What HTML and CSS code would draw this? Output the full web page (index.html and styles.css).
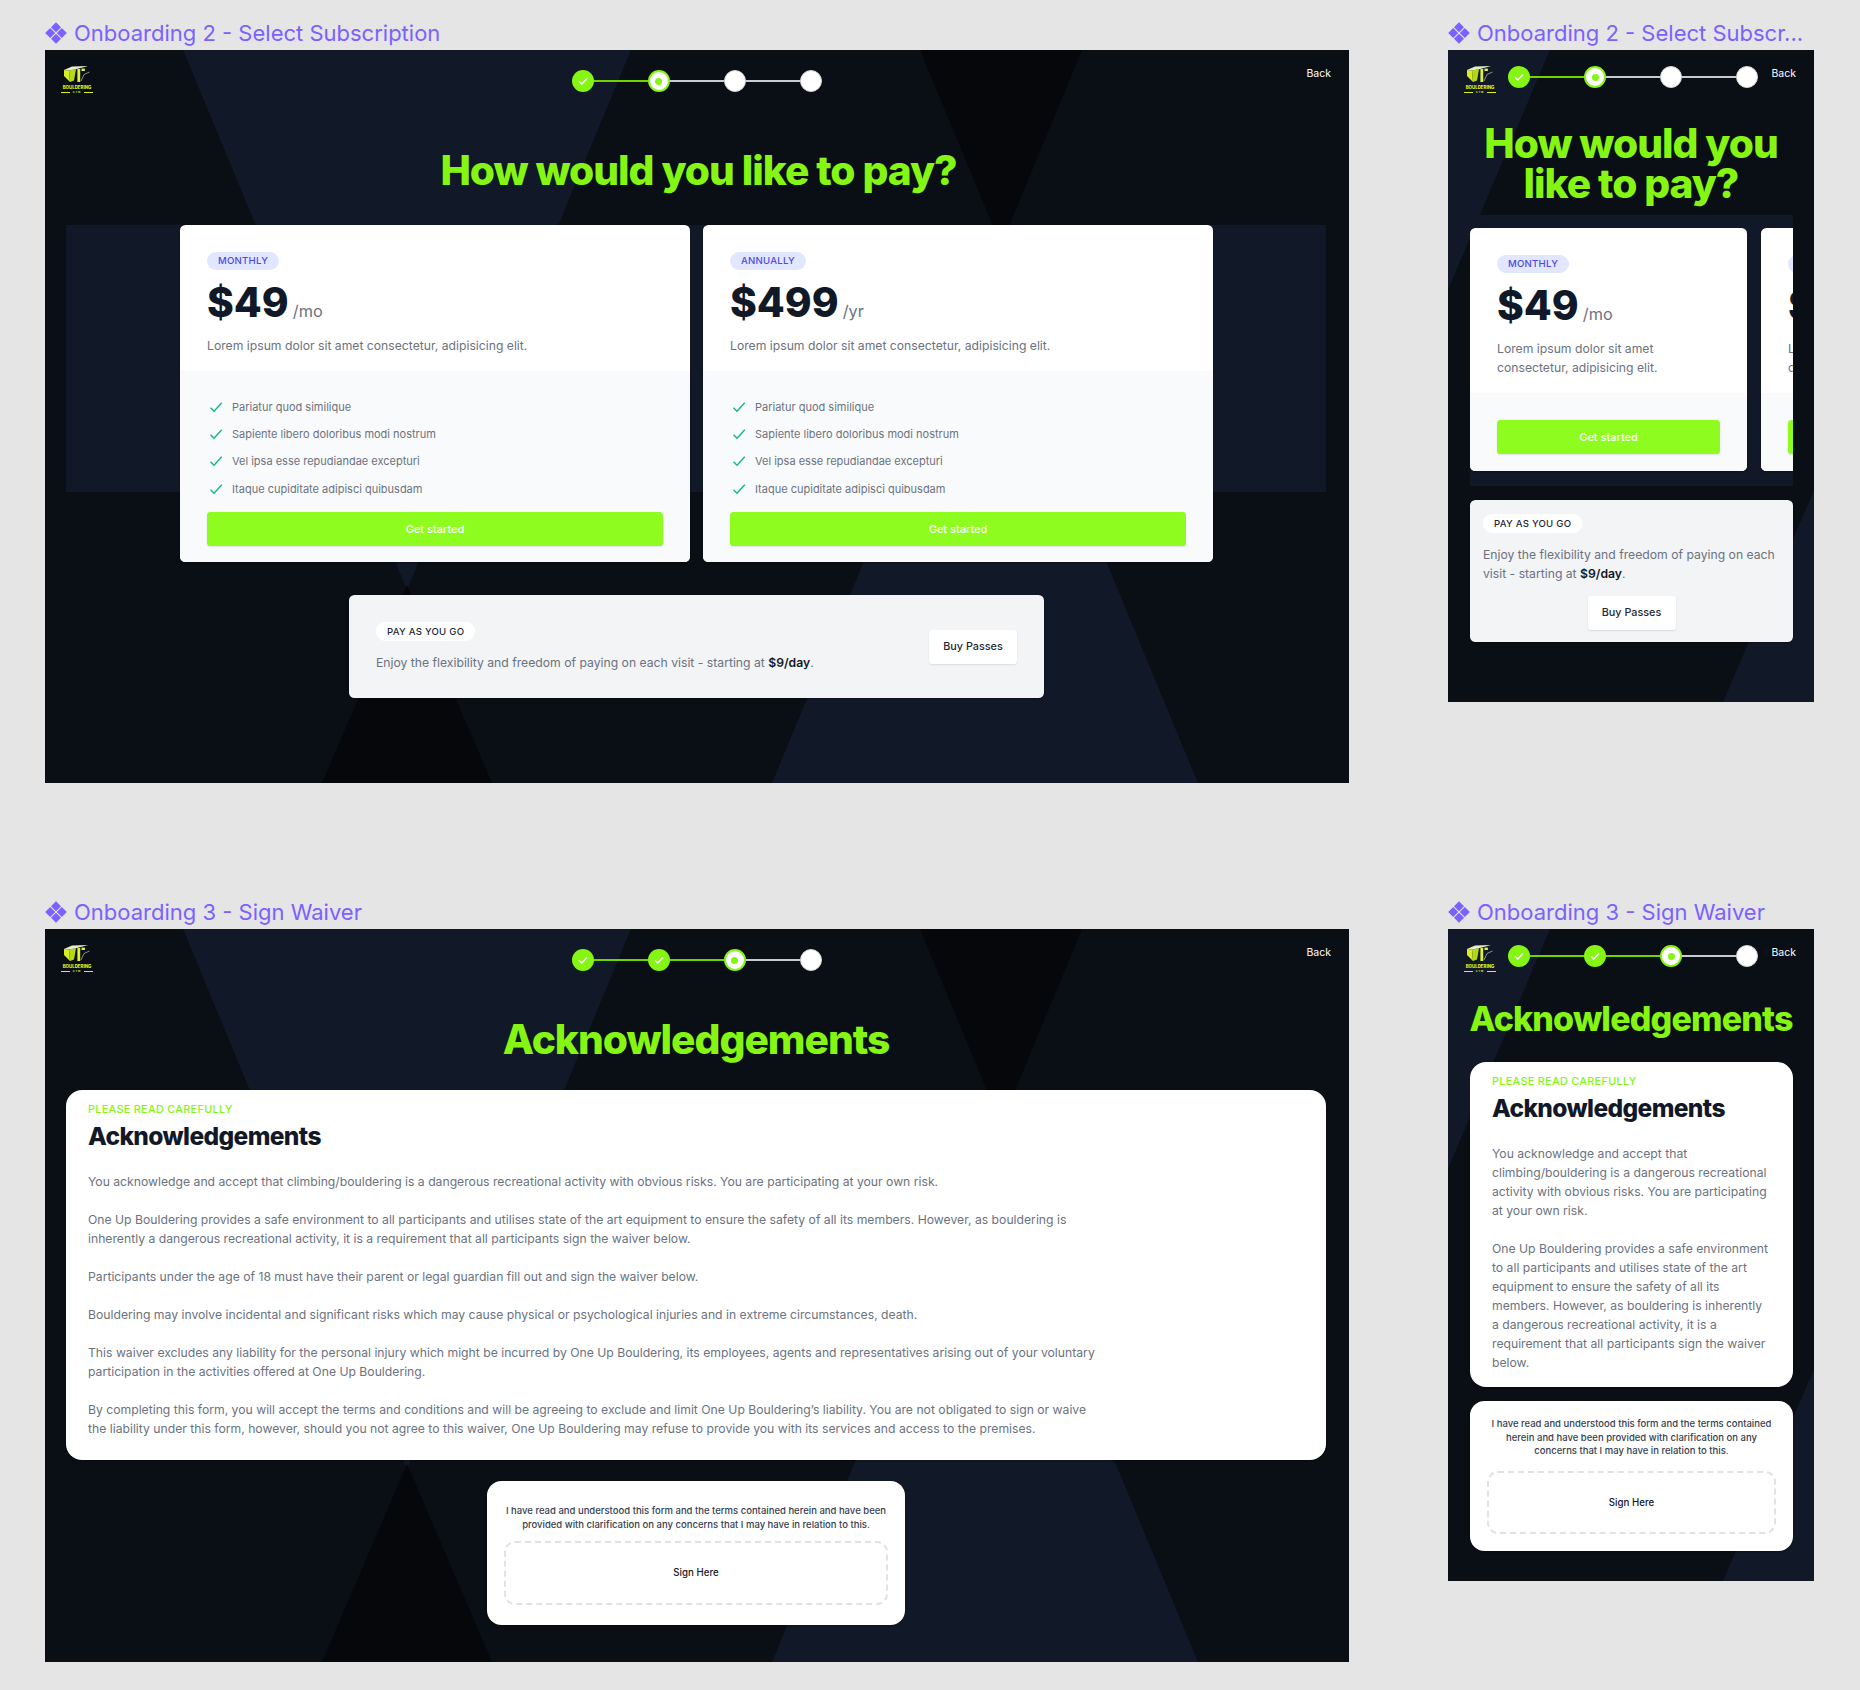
FILE: index.html
```html
<!DOCTYPE html>
<html lang="en">
<head>
  <meta charset="UTF-8">
  <meta name="viewport" content="width=device-width, initial-scale=1.0">
  <title>Onboarding screens</title>
  <link rel="stylesheet" href="styles.css">
</head>
<body>
  <svg class="defs" width="0" height="0" aria-hidden="true">
    <symbol id="logo-mark" viewBox="0 0 32 22">
      <polygon points="3,6 8,6.5 9,18 3,12" fill="#d6ee2a"/>
      <polygon points="8,6.5 15,5.3 13,16.5 9,18" fill="#b4d814"/>
      <polygon points="3,6 11,2.5 27,2 15,5.3 8,6.5" fill="#e6ecc8"/>
      <rect x="16.4" y="5" width="2.8" height="13" fill="#dff23a"/>
      <rect x="20.5" y="4.6" width="3.4" height="2.4" fill="#dff23a"/>
      <path d="M20 17 L23 10.5 L28.5 8" stroke="#dfe6d0" stroke-width=".6" fill="none"/>
    </symbol>
    <symbol id="shapes-wide" viewBox="0 0 1304 733" preserveAspectRatio="none">
      <polygon points="138,0 586,0 362,540" fill="#111827"/>
      <polygon points="362,535 277,733 447,733" fill="#05070b"/>
      <polygon points="875,0 1037,0 956,195" fill="#05070b"/>
      <polygon points="940,219 727,733 1153,733" fill="#111827"/>
    </symbol>
    <symbol id="shapes-narrow" viewBox="0 0 366 652" preserveAspectRatio="none">
      <polygon points="0,0 102,0 0,240" fill="#111827"/>
      <polygon points="366,440 275,652 366,652" fill="#111827"/>
    </symbol>
    <symbol id="tick" viewBox="0 0 14 14">
      <path d="M1.5 7.8 L5 11.2 L12.8 2.8" fill="none" stroke="#10b981" stroke-width="1.4"/>
    </symbol>
    <symbol id="tick-white" viewBox="0 0 12 12">
      <path d="M2 6.4 L4.8 9 L10 3.4" fill="none" stroke="#fff" stroke-width="1.5"/>
    </symbol>
    <symbol id="component" viewBox="0 0 22 22">
      <polygon points="11,0.2 16,5.2 11,10.2 6,5.2" fill="#7b61ff"/>
      <polygon points="5.2,6 10.2,11 5.2,16 0.2,11" fill="#7b61ff"/>
      <polygon points="16.8,6 21.8,11 16.8,16 11.8,11" fill="#7b61ff"/>
      <polygon points="11,11.8 16,16.8 11,21.8 6,16.8" fill="#7b61ff"/>
    </symbol>
  </svg>

  <main class="board">

    <!-- subscription, desktop -->
    <section class="artboard">
      <h3 class="frame-label"><svg class="frame-icon"><use href="#component"/></svg>Onboarding 2 - Select Subscription</h3>
      <div class="frame frame-wide">
        <svg class="frame-bg"><use href="#shapes-wide"/></svg>
        <div class="band-wide"></div>
        <div class="topbar topbar-wide">
          <div class="logo"><svg><use href="#logo-mark"/></svg><span class="logo-name">BOULDERING</span><span class="logo-gym">GYM</span></div>
          <div class="stepper">
            <span class="step done"><svg><use href="#tick-white"/></svg></span><span class="step-line on"></span>
            <span class="step current"></span><span class="step-line"></span>
            <span class="step"></span><span class="step-line"></span>
            <span class="step"></span>
          </div>
          <a class="back">Back</a>
        </div>
        <h1 class="headline pay-headline">How would you like to pay?</h1>
        <div class="plans">
          <article class="plan">
            <div class="plan-top">
              <span class="pill">Monthly</span>
              <p class="price"><b>$49</b> <span>/mo</span></p>
              <p class="plan-desc">Lorem ipsum dolor sit amet consectetur, adipisicing elit.</p>
            </div>
            <div class="plan-bottom">
              <ul class="features">
                <li><svg><use href="#tick"/></svg>Pariatur quod similique</li>
                <li><svg><use href="#tick"/></svg>Sapiente libero doloribus modi nostrum</li>
                <li><svg><use href="#tick"/></svg>Vel ipsa esse repudiandae excepturi</li>
                <li><svg><use href="#tick"/></svg>Itaque cupiditate adipisci quibusdam</li>
              </ul>
              <a class="btn-green">Get started</a>
            </div>
          </article>
          <article class="plan">
            <div class="plan-top">
              <span class="pill">Annually</span>
              <p class="price"><b>$499</b> <span>/yr</span></p>
              <p class="plan-desc">Lorem ipsum dolor sit amet consectetur, adipisicing elit.</p>
            </div>
            <div class="plan-bottom">
              <ul class="features">
                <li><svg><use href="#tick"/></svg>Pariatur quod similique</li>
                <li><svg><use href="#tick"/></svg>Sapiente libero doloribus modi nostrum</li>
                <li><svg><use href="#tick"/></svg>Vel ipsa esse repudiandae excepturi</li>
                <li><svg><use href="#tick"/></svg>Itaque cupiditate adipisci quibusdam</li>
              </ul>
              <a class="btn-green">Get started</a>
            </div>
          </article>
        </div>
        <div class="payg payg-wide">
          <div>
            <span class="pill pill-white">Pay as you go</span>
            <p class="payg-text">Enjoy the flexibility and freedom of paying on each visit - starting at <b>$9/day</b>.</p>
          </div>
          <a class="btn-white">Buy Passes</a>
        </div>
      </div>
    </section>

    <!-- subscription, mobile -->
    <section class="artboard">
      <h3 class="frame-label"><svg class="frame-icon"><use href="#component"/></svg>Onboarding 2 - Select Subscr...</h3>
      <div class="frame frame-narrow">
        <svg class="frame-bg"><use href="#shapes-narrow"/></svg>
        <div class="topbar topbar-narrow">
          <div class="logo"><svg><use href="#logo-mark"/></svg><span class="logo-name">BOULDERING</span><span class="logo-gym">GYM</span></div>
          <div class="stepper">
            <span class="step done"><svg><use href="#tick-white"/></svg></span><span class="step-line on"></span>
            <span class="step current"></span><span class="step-line"></span>
            <span class="step"></span><span class="step-line"></span>
            <span class="step"></span>
          </div>
          <a class="back">Back</a>
        </div>
        <h1 class="headline pay-headline-m">How would you like to pay?</h1>
        <div class="plans-m">
          <article class="plan">
            <div class="plan-top">
              <span class="pill">Monthly</span>
              <p class="price"><b>$49</b> <span>/mo</span></p>
              <p class="plan-desc">Lorem ipsum dolor sit amet consectetur, adipisicing elit.</p>
            </div>
            <div class="plan-bottom plan-bottom-m">
              <a class="btn-green">Get started</a>
            </div>
          </article>
          <article class="plan">
            <div class="plan-top">
              <span class="pill">Annually</span>
              <p class="price"><b>$499</b> <span>/yr</span></p>
              <p class="plan-desc">Lorem ipsum dolor sit amet consectetur, adipisicing elit.</p>
            </div>
            <div class="plan-bottom plan-bottom-m">
              <a class="btn-green">Get started</a>
            </div>
          </article>
        </div>
        <div class="payg payg-narrow">
          <span class="pill pill-white">Pay as you go</span>
          <p class="payg-text">Enjoy the flexibility and freedom of paying on each visit - starting at <b>$9/day</b>.</p>
          <a class="btn-white">Buy Passes</a>
        </div>
      </div>
    </section>

    <!-- waiver, desktop -->
    <section class="artboard">
      <h3 class="frame-label"><svg class="frame-icon"><use href="#component"/></svg>Onboarding 3 - Sign Waiver</h3>
      <div class="frame frame-wide">
        <svg class="frame-bg"><use href="#shapes-wide"/></svg>
        <div class="topbar topbar-wide">
          <div class="logo"><svg><use href="#logo-mark"/></svg><span class="logo-name">BOULDERING</span><span class="logo-gym">GYM</span></div>
          <div class="stepper">
            <span class="step done"><svg><use href="#tick-white"/></svg></span><span class="step-line on"></span>
            <span class="step done"><svg><use href="#tick-white"/></svg></span><span class="step-line on"></span>
            <span class="step current"></span><span class="step-line"></span>
            <span class="step"></span>
          </div>
          <a class="back">Back</a>
        </div>
        <h1 class="headline waiver-headline">Acknowledgements</h1>
        <div class="waiver waiver-wide">
          <p class="eyebrow">Please read carefully</p>
          <h2 class="waiver-title">Acknowledgements</h2>
          <div class="waiver-body">
            <p>You acknowledge and accept that climbing/bouldering is a dangerous recreational activity with obvious risks. You are participating at your own risk.</p>
            <p>One Up Bouldering provides a safe environment to all participants and utilises state of the art equipment to ensure the safety of all its members. However, as bouldering is inherently a dangerous recreational activity, it is a requirement that all participants sign the waiver below.</p>
            <p>Participants under the age of 18 must have their parent or legal guardian fill out and sign the waiver below.</p>
            <p>Bouldering may involve incidental and significant risks which may cause physical or psychological injuries and in extreme circumstances, death.</p>
            <p>This waiver excludes any liability for the personal injury which might be incurred by One Up Bouldering, its employees, agents and representatives arising out of your voluntary participation in the activities offered at One Up Bouldering.</p>
            <p>By completing this form, you will accept the terms and conditions and will be agreeing to exclude and limit One Up Bouldering’s liability. You are not obligated to sign or waive the liability under this form, however, should you not agree to this waiver, One Up Bouldering may refuse to provide you with its services and access to the premises.</p>
          </div>
        </div>
        <div class="sign sign-wide">
          <p class="sign-text">I have read and understood this form and the terms contained herein and have been provided with clarification on any concerns that I may have in relation to this.</p>
          <div class="sign-box">Sign Here</div>
        </div>
      </div>
    </section>

    <!-- waiver, mobile -->
    <section class="artboard">
      <h3 class="frame-label"><svg class="frame-icon"><use href="#component"/></svg>Onboarding 3 - Sign Waiver</h3>
      <div class="frame frame-narrow">
        <svg class="frame-bg"><use href="#shapes-narrow"/></svg>
        <div class="topbar topbar-narrow">
          <div class="logo"><svg><use href="#logo-mark"/></svg><span class="logo-name">BOULDERING</span><span class="logo-gym">GYM</span></div>
          <div class="stepper">
            <span class="step done"><svg><use href="#tick-white"/></svg></span><span class="step-line on"></span>
            <span class="step done"><svg><use href="#tick-white"/></svg></span><span class="step-line on"></span>
            <span class="step current"></span><span class="step-line"></span>
            <span class="step"></span>
          </div>
          <a class="back">Back</a>
        </div>
        <h1 class="headline waiver-headline-m">Acknowledgements</h1>
        <div class="waiver waiver-narrow">
          <p class="eyebrow">Please read carefully</p>
          <h2 class="waiver-title">Acknowledgements</h2>
          <div class="waiver-body">
            <p>You acknowledge and accept that climbing/bouldering is a dangerous recreational activity with obvious risks. You are participating at your own risk.</p>
            <p>One Up Bouldering provides a safe environment to all participants and utilises state of the art equipment to ensure the safety of all its members. However, as bouldering is inherently a dangerous recreational activity, it is a requirement that all participants sign the waiver below.</p>
          </div>
        </div>
        <div class="sign sign-narrow">
          <p class="sign-text">I have read and understood this form and the terms contained herein and have been provided with clarification on any concerns that I may have in relation to this.</p>
          <div class="sign-box">Sign Here</div>
        </div>
      </div>
    </section>

  </main>
</body>
</html>
```

FILE: styles.css
```css
* {
  box-sizing: border-box;
}

body {
  margin: 0;
  background-color: #e5e5e5;
  font-family: 'Inter', 'Noto Sans', sans-serif;
  color: #111827;
}

p, h1, h2, h3, ul {
  margin: 0;
  padding: 0;
}

.defs {
  position: absolute;
}

/* canvas */
.board {
  display: grid;
  grid-template-columns: 1304px 366px;
  column-gap: 99px;
  row-gap: 116px;
  align-items: start;
  padding: 20px 0 0 45px;
}

.frame-label {
  display: flex;
  align-items: center;
  gap: 7px;
  height: 30px;
  font-size: 22px;
  font-weight: 400;
  line-height: 26px;
  color: #7b61ff;
  white-space: nowrap;
  padding-bottom: 4px;
}

.frame-icon {
  width: 22px;
  height: 22px;
  flex: none;
}

.frame {
  position: relative;
  overflow: hidden;
  background-color: #0a0e15;
}

.frame > * {
  position: relative;
}

.frame-wide {
  width: 1304px;
  height: 733px;
}

.frame-narrow {
  width: 366px;
  height: 652px;
}

.frame > .frame-bg,
.frame > .band-wide {
  position: absolute;
}

.frame-bg {
  top: 0;
  left: 0;
  width: 100%;
  height: 100%;
}

.band-wide {
  top: 175px;
  left: 21px;
  width: 1260px;
  height: 267px;
  background-color: #111827;
}

/* top bar */
.topbar {
  height: 46px;
  padding: 14px 17px 0 16px;
  align-items: start;
}

.topbar-wide {
  display: grid;
  grid-template-columns: 1fr auto 1fr;
}

.topbar-narrow {
  display: flex;
  gap: 12px;
}

.logo {
  display: flex;
  flex-direction: column;
  align-items: center;
  width: 32px;
  height: 32px;
  flex: none;
}

.logo svg {
  width: 32px;
  height: 22px;
  flex: none;
}

.logo-name {
  font-size: 4.4px;
  font-weight: 800;
  line-height: 4.5px;
  white-space: nowrap;
  color: #dcf01e;
}

.logo-gym {
  display: flex;
  align-items: center;
  gap: 3px;
  width: 100%;
  font-size: 2.4px;
  font-weight: 700;
  line-height: 3px;
  letter-spacing: 0.4em;
  color: #dcf01e;
}

.logo-gym::before,
.logo-gym::after {
  content: "";
  flex: 1;
  height: 0.4px;
  background-color: #dcf01e;
}

.stepper {
  display: flex;
  align-items: center;
  margin-top: 6px;
}

.topbar-narrow .stepper {
  margin-top: 2px;
}

.step {
  display: flex;
  align-items: center;
  justify-content: center;
  width: 22px;
  height: 22px;
  flex: none;
  border-radius: 50%;
  background-color: #fff;
  border: 1.5px solid #d1d5db;
}

.step svg {
  width: 12px;
  height: 12px;
}

.step.done {
  background-color: #85f514;
  border: none;
}

.step.current {
  border: 2px solid #85f514;
}

.step.current::after {
  content: "";
  width: 7px;
  height: 7px;
  border-radius: 50%;
  background-color: #85f514;
}

.step-line {
  width: 54px;
  height: 2px;
  background-color: #c9cbd1;
}

.step-line.on {
  background-color: #6fd400;
}

.back {
  justify-self: end;
  margin: 3px 1px 0 auto;
  font-size: 10.5px;
  line-height: 14px;
  font-weight: 400;
  color: #fff;
}

/* headings */
.headline {
  text-align: center;
  font-weight: 800;
  letter-spacing: -0.025em;
  color: #85f514;
}

.pay-headline {
  margin: 53px 0 32px;
  padding-left: 3px;
  font-size: 40.7px;
  line-height: 44px;
}

.pay-headline-m {
  margin: 28px 22px 11px;
  font-size: 40.7px;
  line-height: 40px;
}

.waiver-headline {
  margin: 43px 0 28px;
  padding-right: 2px;
  font-size: 40.7px;
  line-height: 44px;
}

.waiver-headline-m {
  margin: 24px 0 23px;
  font-size: 34px;
  line-height: 40px;
}

/* plan cards */
.plans {
  display: flex;
  gap: 13px;
  padding-left: 135px;
}

.plans-m {
  display: flex;
  gap: 14px;
  width: 323px;
  height: 271px;
  margin-left: 22px;
  padding-top: 13px;
  overflow: hidden;
  background-color: #111827;
}

.plan {
  display: flex;
  flex-direction: column;
  width: 510px;
  flex: none;
  border-radius: 5.5px;
  overflow: hidden;
  background-color: #fff;
  box-shadow: 0 1px 2px rgba(0, 0, 0, 0.3);
}

.plans-m .plan {
  width: 277px;
  height: 243px;
}

.plan-top {
  padding: 27px 27px 16px;
}

.pill {
  display: block;
  width: fit-content;
  height: 18px;
  padding: 0 11px;
  border-radius: 9px;
  font-size: 9.6px;
  font-weight: 500;
  line-height: 18px;
  letter-spacing: 0.025em;
  text-transform: uppercase;
  color: #4f46e5;
  background-color: #e0e7ff;
}

.pill-white {
  height: 19px;
  line-height: 19px;
  color: #1f2937;
  background-color: #fff;
}

.price {
  display: flex;
  align-items: baseline;
  gap: 4px;
  height: 44px;
  margin-top: 11px;
  line-height: 44px;
}

.price b {
  font-size: 40.7px;
  font-weight: 800;
  color: #111827;
}

.price span {
  font-size: 16.3px;
  color: #6b7280;
}

.plan-desc {
  margin-top: 11px;
  font-size: 12.2px;
  line-height: 19px;
  color: #6b7280;
}

.plan-bottom {
  flex: 1;
  padding: 27px 27px 16px;
  background-color: #f9fafb;
}

.plan-bottom-m {
  padding-top: 27px;
}

.features {
  display: flex;
  flex-direction: column;
  gap: 9.2px;
  list-style: none;
  margin-bottom: 14.7px;
}

.features li {
  display: flex;
  align-items: center;
  gap: 9px;
  height: 18px;
  font-size: 11px;
  color: #6b7280;
}

.features svg {
  width: 14px;
  height: 14px;
  margin-left: 2px;
  flex: none;
}

.btn-green {
  display: block;
  height: 34px;
  border-radius: 3.6px;
  font-size: 11px;
  font-weight: 500;
  line-height: 34px;
  text-align: center;
  color: #fff;
  background-color: #8dfc1e;
  box-shadow: 0 1px 2px rgba(0, 0, 0, 0.1);
}

/* pay as you go */
.payg {
  border-radius: 5.5px;
  background-color: #f3f4f6;
  box-shadow: 0 1px 2px rgba(0, 0, 0, 0.3);
}

.payg-wide {
  display: flex;
  align-items: center;
  justify-content: space-between;
  width: 695px;
  height: 103px;
  margin: 33px 0 0 304px;
  padding: 0 27px;
}

.payg-narrow {
  width: 323px;
  height: 142px;
  margin: 14px 0 0 22px;
  padding: 14px 13px 0;
  text-align: left;
}

.payg-text {
  margin-top: 12px;
  font-size: 12.2px;
  line-height: 19px;
  color: #6b7280;
}

.payg-text b {
  font-weight: 600;
  color: #111827;
}

.btn-white {
  display: block;
  width: 88px;
  height: 34px;
  border-radius: 3.6px;
  font-size: 10.8px;
  font-weight: 500;
  line-height: 34px;
  text-align: center;
  color: #1f2937;
  background-color: #fff;
  box-shadow: 0 1px 2px rgba(0, 0, 0, 0.1);
}

.payg-narrow .btn-white {
  margin: 13px auto 0;
}

/* waiver */
.waiver {
  border-radius: 16px;
  background-color: #fff;
  box-shadow: 0 1px 2px rgba(0, 0, 0, 0.3);
}

.waiver-wide {
  width: 1260px;
  height: 369.5px;
  margin-left: 21px;
  padding: 11px 22px 0;
}

.waiver-narrow {
  width: 323px;
  height: 325px;
  margin-left: 22px;
  padding: 11px 22px 0;
}

.eyebrow {
  font-size: 10.9px;
  font-weight: 500;
  line-height: 16px;
  letter-spacing: 0.025em;
  text-transform: uppercase;
  color: #85f514;
}

.waiver-title {
  margin-top: 3px;
  font-size: 24.5px;
  font-weight: 800;
  line-height: 32px;
  letter-spacing: -0.025em;
  color: #111827;
}

.waiver-body {
  display: flex;
  flex-direction: column;
  gap: 19px;
  margin-top: 20px;
  font-size: 12.2px;
  line-height: 19px;
  color: #6b7280;
}

.waiver-wide .waiver-body {
  width: 1016px;
}

.sign {
  border-radius: 14.5px;
  background-color: #fff;
  box-shadow: 0 1px 2px rgba(0, 0, 0, 0.3);
}

.sign-wide {
  width: 418px;
  height: 144px;
  margin: 21.5px 0 0 442px;
  padding: 23px 17px 0;
}

.sign-narrow {
  width: 323px;
  height: 150px;
  margin: 14px 0 0 22px;
  padding: 16px 17px 0;
}

.sign-text {
  font-size: 9.5px;
  font-weight: 500;
  line-height: 13.6px;
  text-align: center;
  color: #374151;
}

.sign-box {
  display: flex;
  align-items: center;
  justify-content: center;
  height: 63.5px;
  margin-top: 10px;
  border: 2px dashed #e0e2e6;
  border-radius: 11px;
  font-size: 9.7px;
  font-weight: 500;
  color: #111827;
}

.sign-narrow .sign-box {
  margin-top: 13px;
}
```
